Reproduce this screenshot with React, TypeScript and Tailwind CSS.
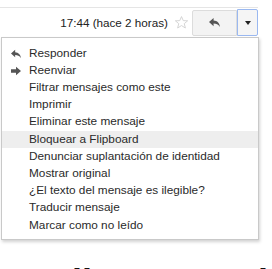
import React from 'react'

const items = [
  'Responder',
  'Reenviar',
  'Filtrar mensajes como este',
  'Imprimir',
  'Eliminar este mensaje',
  'Bloquear a Flipboard',
  'Denunciar suplantación de identidad',
  'Mostrar original',
  '¿El texto del mensaje es ilegible?',
  'Traducir mensaje',
  'Marcar como no leído',
]

function ReplyIcon({ className }: { className?: string }) {
  return (
    <svg viewBox="0 0 14 12" className={className}>
      <path d="M6 1 L1 5.5 L6 10 L6 7.2 C9 7.2 11 8 13 11 C12.5 6.5 10 4 6 3.8 Z" fill="currentColor" />
    </svg>
  )
}

function ForwardIcon({ className }: { className?: string }) {
  return (
    <svg viewBox="0 0 14 12" className={className}>
      <path d="M1 4 L7 4 L7 1 L13 6 L7 11 L7 8 L1 8 Z" fill="currentColor" />
    </svg>
  )
}

export default function App() {
  return (
    <div className="relative w-[272px] h-[269px] overflow-hidden bg-white font-['Liberation_Sans',Arial,sans-serif]">
      {/* top divider */}
      <div className="h-[8px] w-[258px] border-b border-[#e5e5e5]" />

      {/* header row */}
      <div className="flex items-center justify-end w-[258px] h-[27px] mt-[1px]">
        <span className="text-[11.7px] text-[#222] mr-[6px] leading-none">17:44 (hace 2 horas)</span>
        <svg viewBox="0 0 24 24" className="w-[15px] h-[15px] mr-[3px]">
          <path
            d="M12 2.5 L14.8 9 L21.8 9.3 L16.4 13.8 L18.2 20.8 L12 16.9 L5.8 20.8 L7.6 13.8 L2.2 9.3 L9.2 9 Z"
            fill="none"
            stroke="#cfcfcf"
            strokeWidth="1.4"
            strokeLinejoin="round"
          />
        </svg>
        <div className="flex items-center justify-center w-[45px] h-[26px] bg-[#f3f3f3] border border-[#dcdcdc] rounded-l-[2px]">
          <ReplyIcon className="w-[13px] h-[11px] text-[#555]" />
        </div>
        <div className="flex items-center justify-center w-[21px] h-[27px] bg-[#f5f5f5] border border-[#9ab8f0] rounded-r-[2px]">
          <span className="block w-0 h-0 border-l-[3px] border-r-[3px] border-t-[4px] border-l-transparent border-r-transparent border-t-[#222]" />
        </div>
      </div>

      {/* menu */}
      <div className="relative ml-[1px] mt-[1px] w-[258px] bg-white border border-[#c9c9c9] shadow-[1px_2px_3px_rgba(0,0,0,0.18)] pt-[7px] pb-[5px]">
        {items.map((label, i) => (
          <div
            key={label}
            className={`flex items-center h-[17.2px] text-[11.8px] text-[#2a2a2a] leading-none ${i === 5 ? 'bg-[#eeeeee]' : ''}`}
          >
            <span className="w-[27px] flex justify-center pl-[1px]">
              {i === 0 && <ReplyIcon className="w-[12px] h-[10px] text-[#555]" />}
              {i === 1 && <ForwardIcon className="w-[12px] h-[10px] text-[#555]" />}
            </span>
            <span>{label}</span>
          </div>
        ))}
      </div>

      {/* heading below, clipped */}
      <div className="mt-[25px] pl-[48px] text-[36px] font-bold text-[#111] leading-none whitespace-nowrap">
        Ellos usan el
      </div>
    </div>
  )
}
